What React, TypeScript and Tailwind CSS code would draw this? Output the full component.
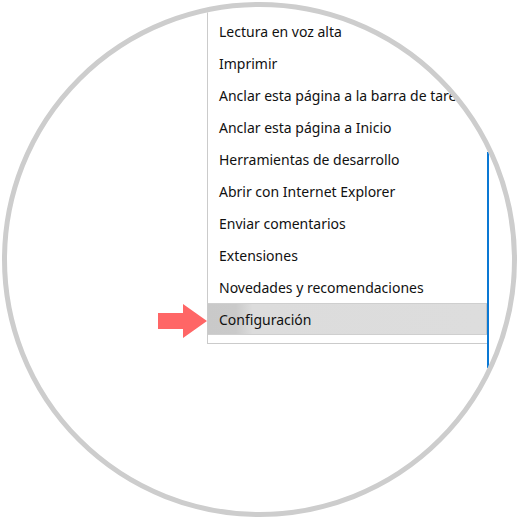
const items = [
  "Lectura en voz alta",
  "Imprimir",
  "Anclar esta página a la barra de tareas",
  "Anclar esta página a Inicio",
  "Herramientas de desarrollo",
  "Abrir con Internet Explorer",
  "Enviar comentarios",
  "Extensiones",
  "Novedades y recomendaciones",
  "Configuración",
];

export default function App() {
  return (
    <div className="w-[520px] h-[520px] bg-white p-[2px]">
      {/* circular crop of the screenshot */}
      <div className="w-[515px] h-[515px] rounded-full border-[5px] border-[#cdcdcd] overflow-hidden bg-white">
        <div className="flex items-start pl-[151px]">
          {/* red pointer arrow */}
          <svg width="49" height="34" viewBox="0 0 49 34" className="mt-[297px] shrink-0">
            <path d="M0 9 H25 V0 L49 17 L25 34 V25 H0 Z" fill="#ff6666" />
          </svg>

          <div
            className="w-[280px] shrink-0 border-l border-b border-[#cbcbcb] pt-[8px] pb-[8px] text-[14px] text-[#111]"
            style={{ fontFamily: '"Noto Sans", "Open Sans", sans-serif' }}
          >
            {items.map((item, i) => {
              const active = i === items.length - 1;
              return (
                <div
                  key={item}
                  className={
                    active
                      ? "h-8 flex items-center pl-[11px] whitespace-nowrap bg-[linear-gradient(90deg,#c9c9c9_0%,#cacaca_10%,#dcdcdc_16%,#dddddd_100%)] border-y border-[#cfcfcf] border-r border-r-[#c4c4c4]"
                      : "h-8 flex items-center pl-[11px] whitespace-nowrap"
                  }
                >
                  {item}
                </div>
              );
            })}
          </div>

          <div className="w-[2px] h-[216px] mt-[145px] bg-[#0a78d4] shrink-0" />
        </div>
      </div>
    </div>
  );
}
